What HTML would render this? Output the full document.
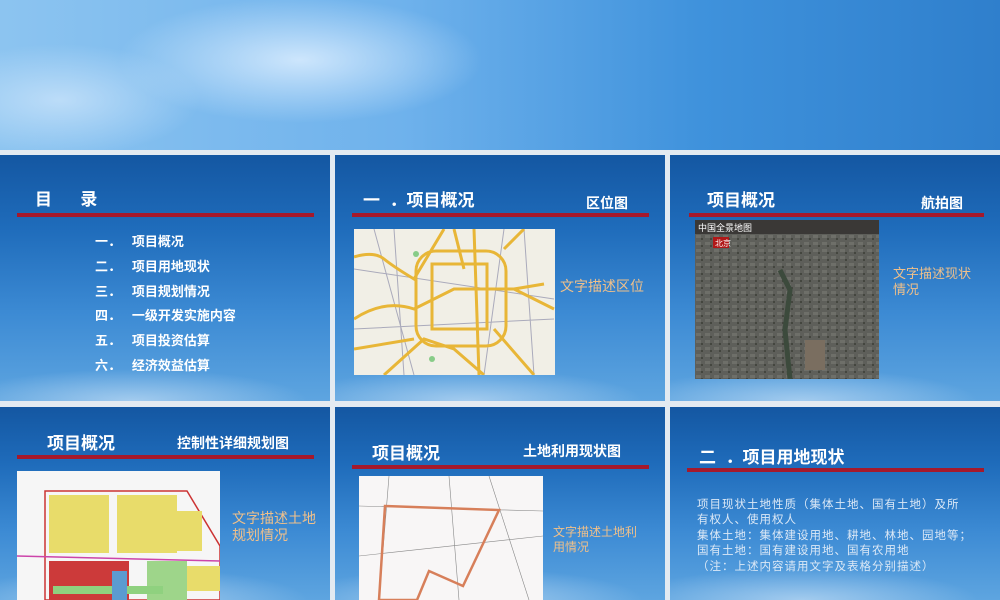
<!DOCTYPE html>
<html><head><meta charset="utf-8"><style>
*{margin:0;padding:0;box-sizing:border-box}
body{width:1000px;height:600px;overflow:hidden;background:#e3eaf1;position:relative;font-family:"Liberation Sans","Noto Sans CJK SC",sans-serif}
.top{position:absolute;left:0;top:0;width:1000px;height:150px;background:radial-gradient(ellipse 260px 90px at 300px 60px,rgba(220,238,255,.85),rgba(220,238,255,0) 70%),radial-gradient(ellipse 200px 80px at 60px 100px,rgba(210,232,252,.7),rgba(210,232,252,0) 70%),linear-gradient(90deg,#8cc4f0 0%,#6fb2ec 40%,#3f92dc 70%,#2f7fcc 100%)}
.p{position:absolute;overflow:hidden;background:radial-gradient(ellipse 220px 40px at 40% 100%,rgba(220,235,250,.55),rgba(220,235,250,0) 80%),linear-gradient(180deg,#1457a2 0%,#1f6cbb 30%,#3d8bd4 65%,#5ea5e0 100%)}
.p *{position:absolute;white-space:nowrap}
.t{color:#fff;font-weight:bold;font-size:17px}
.s{color:#fff;font-weight:bold;font-size:14px}
.l{height:4px;background:#a5192c}
.o{color:#f0c08a;font-size:13px;line-height:16px}
.li{color:#fff;font-weight:bold;font-size:13px}
</style></head><body>
<div class="top"></div>

<div class="p" style="left:0;top:155px;width:330px;height:246px">
 <div class="t" style="left:35px;top:30px">目 &nbsp;&nbsp;&nbsp;&nbsp; 录</div>
 <div class="l" style="left:17px;top:58px;width:297px"></div>
 <div class="li" style="left:95px;top:76px">一．&nbsp;&nbsp;&nbsp;项目概况</div>
 <div class="li" style="left:95px;top:101px">二．&nbsp;&nbsp;&nbsp;项目用地现状</div>
 <div class="li" style="left:95px;top:126px">三．&nbsp;&nbsp;&nbsp;项目规划情况</div>
 <div class="li" style="left:95px;top:150px">四．&nbsp;&nbsp;&nbsp;一级开发实施内容</div>
 <div class="li" style="left:95px;top:175px">五．&nbsp;&nbsp;&nbsp;项目投资估算</div>
 <div class="li" style="left:95px;top:200px">六．&nbsp;&nbsp;&nbsp;经济效益估算</div>
</div>

<div class="p" style="left:335px;top:155px;width:330px;height:246px">
 <div class="t" style="left:28px;top:31px">一 &nbsp;．项目概况</div>
 <div class="s" style="left:251px;top:38px">区位图</div>
 <div class="l" style="left:17px;top:58px;width:297px"></div>
 <svg style="left:19px;top:74px" width="201" height="146" viewBox="0 0 201 146">
  <rect width="201" height="146" fill="#f1efe6"/>
  <g fill="none" stroke="#aab" stroke-width="1"><path d="M0 40L200 70M20 0L60 146M150 0L130 146M0 100L200 90M40 0L50 146M170 0L180 146"/></g>
  <g fill="none" stroke="#e8b637" stroke-width="3">
   <rect x="78" y="35" width="55" height="65"/><rect x="62" y="22" width="90" height="95" rx="20"/>
   <path d="M0 28Q20 22 30 30T60 50L90 0M100 0L110 40M0 90Q30 70 60 80L100 60L160 60L200 80M30 146L70 110L100 120L130 146M150 20L170 0M160 60L190 55M140 100L180 146M120 0L125 146M0 120L60 110"/>
  </g>
  <g fill="#8c8"><circle cx="62" cy="25" r="3"/><circle cx="78" cy="130" r="3"/></g>
 </svg>
 <div class="o" style="left:225px;top:123px;font-size:14px">文字描述区位</div>
</div>

<div class="p" style="left:670px;top:155px;width:330px;height:246px">
 <div class="t" style="left:37px;top:31px">项目概况</div>
 <div class="s" style="left:251px;top:38px">航拍图</div>
 <div class="l" style="left:19px;top:58px;width:295px"></div>
 <svg style="left:25px;top:65px" width="184" height="159" viewBox="0 0 184 159">
  <defs><pattern id="g" width="9" height="7" patternUnits="userSpaceOnUse"><rect width="9" height="7" fill="#5e5f5a"/><rect x="1" y="1" width="5" height="3" fill="#6e6f69"/><rect x="6" y="4" width="2" height="2" fill="#44463f"/></pattern></defs>
  <rect width="184" height="159" fill="url(#g)"/>
  <rect width="184" height="14" fill="#3a3836"/>
  <text x="3" y="11" font-size="9" fill="#fff" font-family="Noto Sans CJK SC">中国全景地图</text>
  <rect x="18" y="17" width="16" height="11" fill="#b01818"/>
  <text x="20" y="26" font-size="8" fill="#fff" font-family="Noto Sans CJK SC">北京</text>
  <path d="M85 50L95 70L90 110L95 159" stroke="#3c4a3c" stroke-width="5" fill="none"/>
  <rect x="110" y="120" width="20" height="30" fill="#7a6e60"/>
 </svg>
 <div class="o" style="left:223px;top:111px">文字描述现状<br>情况</div>
</div>

<div class="p" style="left:0;top:407px;width:330px;height:193px">
 <div class="t" style="left:47px;top:22px">项目概况</div>
 <div class="s" style="left:177px;top:26px">控制性详细规划图</div>
 <div class="l" style="left:17px;top:48px;width:297px"></div>
 <svg style="left:17px;top:64px" width="203" height="129" viewBox="0 0 203 129">
  <rect width="203" height="129" fill="#f6f6f6"/>
  <path d="M28 20L170 20L203 75L203 129L28 129Z" fill="none" stroke="#c33" stroke-width="1.5"/>
  <rect x="32" y="24" width="60" height="58" fill="#e8dc6a"/><rect x="100" y="24" width="60" height="58" fill="#e8dc6a"/>
  <rect x="160" y="40" width="25" height="40" fill="#e8dc6a"/>
  <rect x="32" y="90" width="80" height="39" fill="#cc3a3a"/><rect x="130" y="90" width="40" height="39" fill="#9ed58a"/>
  <rect x="36" y="115" width="110" height="8" fill="#8fd17f"/>
  <rect x="170" y="95" width="33" height="25" fill="#e8dc6a"/>
  <rect x="95" y="100" width="15" height="29" fill="#5b9bd0"/>
  <path d="M0 85L203 90" stroke="#c4a" stroke-width="1.5"/>
 </svg>
 <div class="o" style="left:232px;top:103px;font-size:14px;line-height:17px">文字描述土地<br>规划情况</div>
</div>

<div class="p" style="left:335px;top:407px;width:330px;height:193px">
 <div class="t" style="left:37px;top:32px">项目概况</div>
 <div class="s" style="left:188px;top:34px">土地利用现状图</div>
 <div class="l" style="left:17px;top:58px;width:297px"></div>
 <svg style="left:24px;top:69px" width="184" height="124" viewBox="0 0 184 124">
  <rect width="184" height="124" fill="#f8f6f6"/>
  <g stroke="#888" stroke-width=".6" fill="none"><path d="M0 30L184 35M30 0L20 124M90 0L100 124M0 80L184 60M130 0L170 124"/></g>
  <path d="M26 30L140 34L104 110L70 95L58 124L20 124Z" fill="none" stroke="#d77f5a" stroke-width="2.5"/>
 </svg>
 <div class="o" style="left:218px;top:118px;font-size:12px;line-height:15px">文字描述土地利<br>用情况</div>
</div>

<div class="p" style="left:670px;top:407px;width:330px;height:193px">
 <div class="t" style="left:29px;top:36px">二 &nbsp;．项目用地现状</div>
 <div class="l" style="left:17px;top:61px;width:297px"></div>
 <div style="left:27px;top:91px;color:#dbe8f6;font-size:11.5px;line-height:15.4px;letter-spacing:1px;white-space:normal;width:280px">项目现状土地性质（集体土地、国有土地）及所<br>有权人、使用权人<br>集体土地：集体建设用地、耕地、林地、园地等；<br>国有土地：国有建设用地、国有农用地<br>（注：上述内容请用文字及表格分别描述）</div>
</div>
</body></html>
